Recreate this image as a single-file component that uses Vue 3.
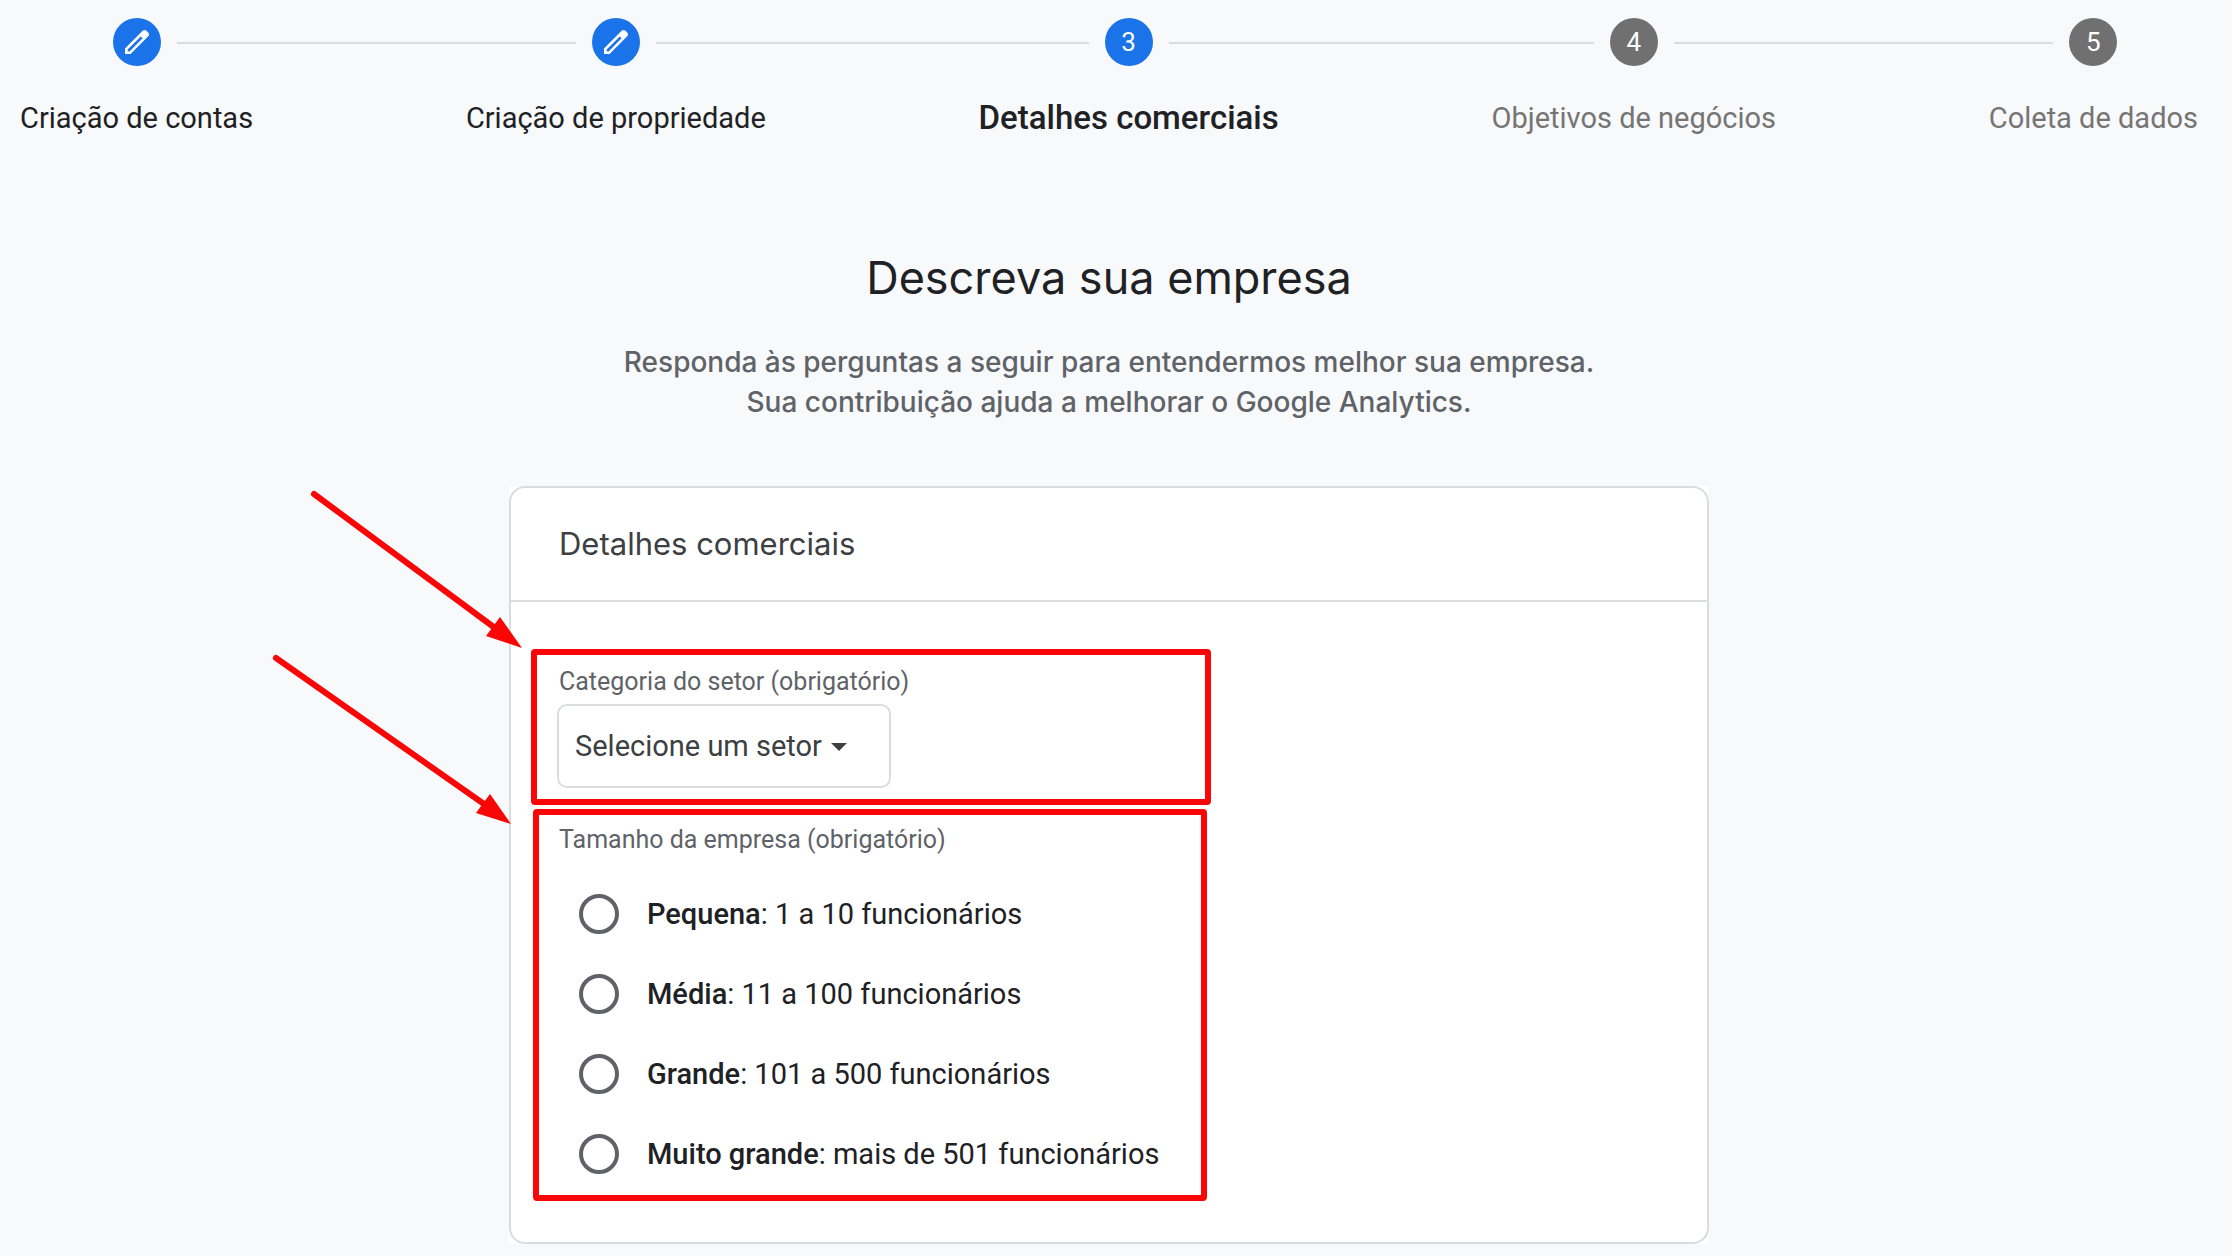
<script setup>
import { ref } from 'vue'

const steps = [
  { label: 'Criação de contas', state: 'done' },
  { label: 'Criação de propriedade', state: 'done' },
  { label: 'Detalhes comerciais', state: 'current' },
  { label: 'Objetivos de negócios', state: 'pending' },
  { label: 'Coleta de dados', state: 'pending' },
]

const sizes = [
  { id: 'small', name: 'Pequena', detail: '1 a 10 funcionários' },
  { id: 'medium', name: 'Média', detail: '11 a 100 funcionários' },
  { id: 'large', name: 'Grande', detail: '101 a 500 funcionários' },
  { id: 'xlarge', name: 'Muito grande', detail: 'mais de 501 funcionários' },
]

const sector = ref('')
const size = ref(null)
</script>

<template>
  <div class="page">
    <ol class="stepper">
      <template v-for="(step, i) in steps" :key="step.label">
        <li v-if="i > 0" class="connector" aria-hidden="true"></li>
        <li class="step" :class="step.state">
          <div class="track">
            <span class="line" :class="{ hidden: i === 0 }"></span>
            <span class="badge">
              <svg v-if="step.state === 'done'" class="pencil" viewBox="0 0 24 24" aria-hidden="true">
                <path
                  d="M20.41 4.94l-1.35-1.35c-.78-.78-2.05-.78-2.83 0L3 16.82V21h4.18L20.41 7.77c.79-.78.79-2.05 0-2.83zm-14 14.12L5 19v-1.36l9.82-9.82 1.41 1.41-9.82 9.83z"
                />
              </svg>
              <template v-else>{{ i + 1 }}</template>
            </span>
            <span class="line" :class="{ hidden: i === steps.length - 1 }"></span>
          </div>
          <span class="step-label">{{ step.label }}</span>
        </li>
      </template>
    </ol>

    <main class="content">
      <h1 class="title">Descreva sua empresa</h1>
      <p class="subtitle">
        Responda às perguntas a seguir para entendermos melhor sua empresa.<br />
        Sua contribuição ajuda a melhorar o Google Analytics.
      </p>

      <div class="card-area">
        <form class="card">
          <h2 class="card-title">Detalhes comerciais</h2>
          <div class="card-body">
            <div class="field">
              <label class="field-label" for="sector">Categoria do setor (obrigatório)</label>
              <div class="select-wrap">
                <select id="sector" v-model="sector" class="select">
                  <option value="">Selecione um setor</option>
                </select>
                <svg class="caret" viewBox="0 0 16 8" aria-hidden="true"><path d="M0 0h16L8 8z" /></svg>
              </div>
            </div>

            <fieldset class="field sizes">
              <legend class="field-label">Tamanho da empresa (obrigatório)</legend>
              <label v-for="s in sizes" :key="s.id" class="option" :for="s.id">
                <input :id="s.id" v-model="size" class="radio" type="radio" name="size" :value="s.id" />
                <span><b class="name">{{ s.name }}</b>: {{ s.detail }}</span>
              </label>
            </fieldset>
          </div>
        </form>

        <!-- Red guide marks laid over the form -->
        <svg class="marks" width="1200" height="758" aria-hidden="true">
          <rect x="25" y="166" width="674" height="150" rx="1" />
          <rect x="27" y="326" width="668" height="386" rx="1" />
          <path class="shaft" d="M-195 8L-14 142M-233 172L-25 318" />
          <path class="head" d="M13 162L-9 131L-23 150zM2 338L-19 308L-33 327z" />
        </svg>
      </div>
    </main>
  </div>
</template>

<style>
body {
  margin: 0;
  background: #f8f9fb;
}
</style>

<style scoped>
.page {
  box-sizing: border-box;
  min-height: 100vh;
  padding: 18px 14px 12px 0;
  background: #f8f9fb;
  color: #202124;
  font-family: Roboto, 'Liberation Sans', sans-serif;
  font-size: 29px;
  line-height: 40px;
}

.stepper {
  display: flex;
  margin: 0;
  padding: 0 20px;
  list-style: none;
}

.connector {
  flex: 1;
  height: 2px;
  margin-top: 24px;
  background: #dadce0;
}

.step {
  display: flex;
  flex-direction: column;
  gap: 32px;
  white-space: nowrap;
}

.track {
  display: flex;
  align-items: flex-start;
  gap: 16px;
}

.line {
  flex: 1;
  height: 2px;
  margin-top: 24px;
  background: #dadce0;
}

.line.hidden {
  visibility: hidden;
}

.badge {
  display: flex;
  align-items: center;
  justify-content: center;
  width: 48px;
  height: 48px;
  border-radius: 50%;
  background: #1a73e8;
  color: #fff;
  font-size: 26px;
}

.pencil {
  width: 32px;
  height: 32px;
  fill: #fff;
}

.step-label {
  text-align: center;
}

.current .step-label {
  font-size: 33px;
  font-weight: 500;
}

.pending .badge {
  background: #707070;
}

.pending .step-label {
  color: #757575;
}

.content {
  padding-top: 108px;
}

.title {
  margin: 0;
  font-family: Inter, Roboto, sans-serif;
  font-size: 45px;
  font-weight: 400;
  line-height: 64px;
  text-align: center;
}

.subtitle {
  margin: 32px 0 0;
  color: #5f6368;
  font-family: Inter, Roboto, sans-serif;
  font-size: 28px;
  font-weight: 500;
  text-align: center;
}

.card-area {
  position: relative;
  max-width: 1200px;
  margin: 64px auto 0;
  background: #fff;
}

.card {
  border: 2px solid #dadce0;
  border-radius: 16px;
}

.card-title {
  margin: 0;
  padding: 36px 48px;
  border-bottom: 2px solid #dadce0;
  color: #3c4043;
  font-family: Inter, Roboto, sans-serif;
  font-size: 31px;
  font-weight: 400;
}

.card-body {
  padding: 60px 46px 48px;
}

.field-label {
  display: block;
  padding: 0 2px;
  color: #5f6368;
  font-size: 25px;
}

.select-wrap {
  position: relative;
  width: 334px;
  margin: 2px 0 32px;
}

.select {
  display: block;
  width: 100%;
  height: 84px;
  padding: 0 16px;
  border: 2px solid #dadce0;
  border-radius: 10px;
  background: #fff;
  color: #3c4043;
  font: inherit;
  appearance: none;
}

.caret {
  position: absolute;
  top: 39px;
  right: 44px;
  width: 16px;
  height: 8px;
  fill: #3c4043;
}

.sizes {
  margin: 0;
  padding: 0;
  border: 0;
}

.sizes .field-label {
  margin-bottom: 14px;
}

.option {
  display: flex;
  align-items: center;
  gap: 28px;
  height: 80px;
  padding-left: 22px;
}

.radio {
  width: 40px;
  height: 40px;
  margin: 0;
  border: 4px solid #5f6368;
  border-radius: 50%;
  appearance: none;
}

.radio:checked {
  border-color: #1a73e8;
  background: radial-gradient(#1a73e8 50%, transparent 52%);
}

.name {
  font-weight: 500;
}

.marks {
  position: absolute;
  top: 0;
  left: 0;
  overflow: visible;
  pointer-events: none;
  fill: none;
  stroke: #f90606;
  stroke-width: 6;
  stroke-linecap: round;
  stroke-linejoin: round;
}

.head {
  fill: #f90606;
  stroke: none;
}
</style>
